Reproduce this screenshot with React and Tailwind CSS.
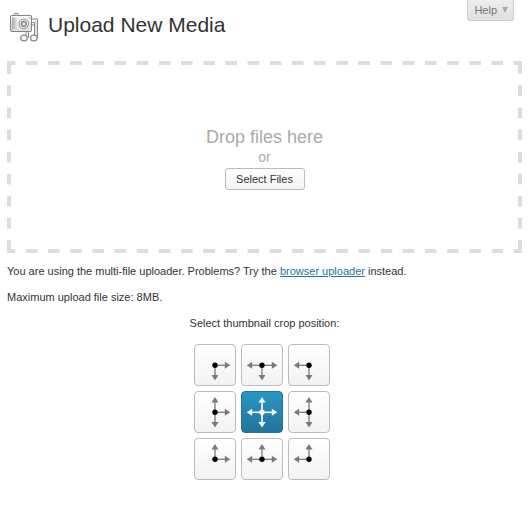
import { useState } from "react";

const POSITIONS = [
  { id: "top left", arms: ["right", "down"] },
  { id: "top center", arms: ["left", "right", "down"] },
  { id: "top right", arms: ["left", "down"] },
  { id: "middle left", arms: ["up", "right", "down"] },
  { id: "center", arms: ["up", "right", "down", "left"] },
  { id: "middle right", arms: ["up", "left", "down"] },
  { id: "bottom left", arms: ["up", "right"] },
  { id: "bottom center", arms: ["up", "left", "right"] },
  { id: "bottom right", arms: ["up", "left"] },
];

const ANGLES = { right: 0, down: 90, left: 180, up: 270 };

function CropArrows({ arms, active }) {
  const color = active ? "#ffffff" : "#7a7a7a";
  return (
    <svg viewBox="0 0 40 40" className="block size-10" aria-hidden="true">
      {arms.map((arm) => (
        <g key={arm} transform={`rotate(${ANGLES[arm]} 20 20.3)`}>
          <path d="M20 20.3H31" stroke={color} strokeWidth={active ? 1.6 : 1.3} />
          <path d="M29.8 16.8L35.3 20.3L29.8 23.8Z" fill={color} />
        </g>
      ))}
      <circle cx="20" cy="20.3" r="2.7" fill={active ? "#ffffff" : "#000000"} />
    </svg>
  );
}

function MediaIcon() {
  return (
    <svg viewBox="0 0 30 30" className="block size-[30px]" aria-hidden="true">
      <defs>
        <linearGradient id="grip" x1="0" x2="1" y1="0" y2="0">
          <stop offset="0" stopColor="#a8a8a8" />
          <stop offset="1" stopColor="#e4e4e4" />
        </linearGradient>
        <linearGradient id="body" x1="0" x2="0" y1="0" y2="1">
          <stop offset="0" stopColor="#fdfdfd" />
          <stop offset="1" stopColor="#dedede" />
        </linearGradient>
      </defs>
      <g fill="none" stroke="#8a8a8a">
        <path d="M17 26V18.5M22.5 7H28.5V26M22 10.5H25.5V13H22M25.5 13V25M19.500 18V26" strokeWidth="1" />
        <path d="M27 8V24" stroke="#dcdcdc" strokeWidth="1.6" />
        <ellipse cx="15" cy="26" rx="3.300" ry="2.9" fill="#f6f6f6" strokeWidth="1.300" />
        <ellipse cx="24.800" cy="26" rx="3.300" ry="2.9" fill="#f6f6f6" strokeWidth="1.300" />
      </g>
      <path d="M5 3.5V2.5Q5 1.5 6 1.5H8.5Q9.500 1.5 9.500 2.5V3.500" fill="#eee" stroke="#888" />
      <rect x="1.500" y="3.500" width="21" height="16" rx="1.500" fill="url(#body)" stroke="#858585" strokeWidth="1.100" />
      <rect x="3" y="5.500" width="5" height="12" fill="url(#grip)" />
      <circle cx="14.800" cy="11.800" r="4.800" fill="#eeeeee" stroke="#929292" />
      <circle cx="14.800" cy="11.800" r="2.500" fill="#d8d8d8" stroke="#7c7c7c" strokeWidth="1.200" />
      <path d="M19.500 6H21.500" stroke="#999" />
    </svg>
  );
}

export default function App() {
  const [position, setPosition] = useState("center");
  return (
    <main className="min-h-screen bg-white pr-[10px] pl-[7px] font-['Liberation_Sans',Arial,sans-serif] text-[11px] leading-[18px] text-[#333333]">
      <header className="flex items-start justify-between">
        <h1 className="flex items-center gap-[9px] pt-3 pl-[2px] text-[21px] leading-[26px] text-[#333333]">
          <MediaIcon />
          <span className="pb-1">Upload New Media</span>
        </h1>
        <button
          type="button"
          className="mr-2 flex h-[21px] items-center gap-1 rounded-b-[3px] border border-t-0 border-[#cccccc] bg-linear-to-b from-[#eeeeee] to-[#e0e0e0] pr-1 pl-[6px] text-[11px] leading-[18px] text-[#777777]"
        >
          Help
          <svg viewBox="0 0 8 6" className="h-[6px] w-2" aria-hidden="true">
            <path d="M1 0H7L4 6Z" fill="#aaaaaa" />
          </svg>
        </button>
      </header>

      <section
        aria-label="Drop files"
        className="mt-[19px] flex h-48 flex-col items-center bg-[linear-gradient(90deg,#dddddd_25%,transparent_25%,transparent_75%,#dddddd_75%),linear-gradient(90deg,#dddddd_25%,transparent_25%,transparent_75%,#dddddd_75%),linear-gradient(transparent_25%,#dddddd_25%,#dddddd_75%,transparent_75%),linear-gradient(transparent_25%,#dddddd_25%,#dddddd_75%,transparent_75%)] bg-[length:calc((100%-5px)/23)_4px,calc((100%-5px)/23)_4px,4px_calc((100%-15px)/8),4px_calc((100%-15px)/8)] bg-[position:center_top,center_bottom,left_center,right_center] [background-repeat:repeat-x,repeat-x,repeat-y,repeat-y] pt-16 text-[#aaaaaa]"
      >
        <p className="text-[18px] leading-6">Drop files here</p>
        <p className="text-[14px] leading-4">or</p>
        <button
          type="button"
          className="mt-[3px] h-[22px] w-20 rounded-[3px] border border-[#bbbbbb] bg-linear-to-b from-white to-[#f3f3f3] text-[11px] leading-5 text-[#333333]"
        >
          Select Files
        </button>
      </section>

      <p className="mt-[9px]">
        You are using the multi-file uploader. Problems? Try the{" "}
        <a href="#browser-uploader" className="text-[#21759b] underline">
          browser uploader
        </a>{" "}
        instead.
      </p>
      <p className="mt-2">Maximum upload file size: 8MB.</p>

      <fieldset className="mt-2 flex flex-col items-center">
        <legend className="mx-auto">Select thumbnail crop position:</legend>
        <div className="mt-3 grid grid-cols-3 gap-[5px] pr-[5px]">
          {POSITIONS.map(({ id, arms }) => (
            <label
              key={id}
              className="relative block size-[42px] cursor-pointer rounded-[4px] border border-[#bbbbbb] bg-linear-to-b from-white to-[#f3f3f3] has-checked:border-[#21759b] has-checked:from-[#2a95c5] has-checked:to-[#21759b]"
            >
              <input
                type="radio"
                name="crop"
                value={id}
                aria-label={id}
                checked={position === id}
                onChange={() => setPosition(id)}
                className="sr-only"
              />
              <CropArrows arms={arms} active={position === id} />
            </label>
          ))}
        </div>
      </fieldset>
    </main>
  );
}
